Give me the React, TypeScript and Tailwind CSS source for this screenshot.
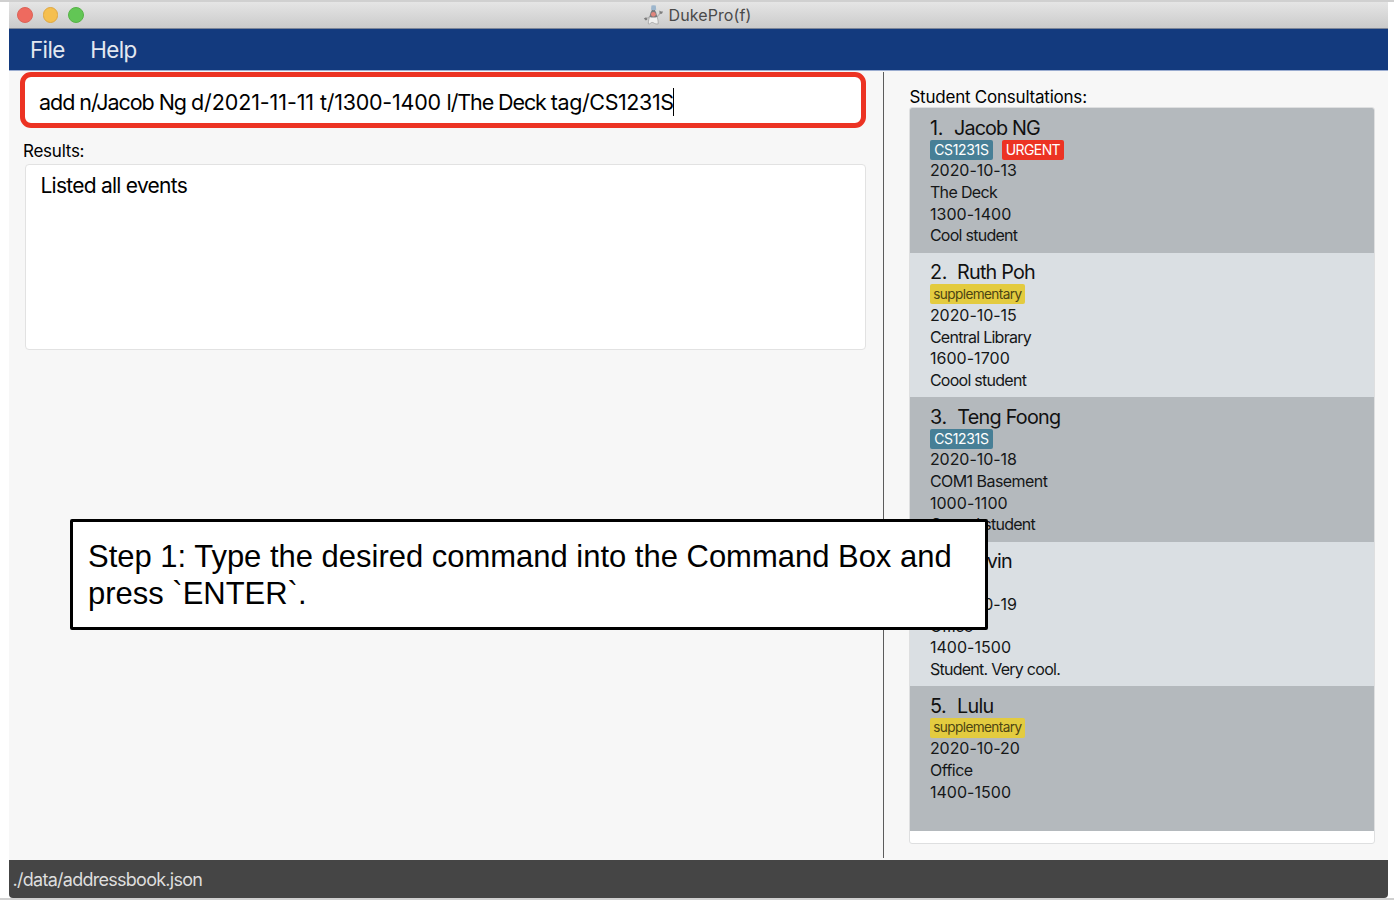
type Tag = { label: string; className: string };
type Consultation = {
  name: string;
  nameClass: string;
  tags: Tag[];
  date: string;
  place: string;
  placeClass: string;
  time: string;
  note: string;
};

const module: Tag = { label: "CS1231S", className: "bg-[#477f96] text-white w-[63px] tracking-[-0.35px] text-[14px]" };
const urgent: Tag = { label: "URGENT", className: "bg-[#ec3323] text-white w-[62px] tracking-[-0.6px] text-[14px]" };
const extra: Tag = { label: "supplementary", className: "bg-[#e3cb3f] text-[#4c4413] w-[95px] tracking-[-0.6px] text-[13.6px]" };

const consultations: Consultation[] = [
  { name: "Jacob NG", nameClass: "ml-[11px] tracking-[-0.9px]", tags: [module, urgent], date: "2020-10-13", place: "The Deck", placeClass: "tracking-[-0.65px]", time: "1300-1400", note: "Cool student" },
  { name: "Ruth Poh", nameClass: "ml-[10px] tracking-[-0.8px]", tags: [extra], date: "2020-10-15", place: "Central Library", placeClass: "tracking-[-0.73px]", time: "1600-1700", note: "Coool student" },
  { name: "Teng Foong", nameClass: "ml-[10.5px] tracking-[-0.75px]", tags: [module], date: "2020-10-18", place: "COM1 Basement", placeClass: "tracking-[-0.55px]", time: "1000-1100", note: "Cooool student" },
  { name: "Kelvin", nameClass: "ml-[13px] tracking-[-0.8px]", tags: [], date: "2020-10-19", place: "Office", placeClass: "tracking-[-0.5px]", time: "1400-1500", note: "Student. Very cool." },
  { name: "Lulu", nameClass: "ml-[10.5px] tracking-[-0.7px]", tags: [extra], date: "2020-10-20", place: "Office", placeClass: "tracking-[-0.5px]", time: "1400-1500", note: "" },
];

function DukeIcon() {
  return (
    <svg width="22" height="20" viewBox="0 0 22 20" className="shrink-0">
      <path d="M6 12.4 L3.2 13.6 M14.2 11.6 L17.6 8" fill="none" stroke="#b4b4b4" strokeWidth="1.2" strokeLinecap="round" />
      <path d="M.8 13.4 L3.2 12.2 L4.4 14.4 L2.8 15.6Z M16.4 5.4 L18 6.4 L20 6.4 L19 8.8 L16.6 8.8Z" fill="#7d7d7d" />
      <path d="M7 11 C5.8 13.5 5.4 16 5.3 18.8 C7 19.6 7.6 17.4 9.2 17.4 C11 17.4 11.6 19.6 15.2 18.9 C15.2 16 14.9 13.5 13.8 11Z" fill="#f0f0f0" stroke="#9a9a9a" strokeWidth=".7" />
      <path d="M10.4 3 C8 5.5 7 9 6.5 12 Q10.4 13.2 14.2 12 C13.7 9 12.8 5.5 10.4 3Z" fill="#77797d" />
      <path d="M8 4.8 L8.4 .6 Q10.6 -.2 12.8 .6 L13.2 4.8 Q10.6 5.6 8 4.8Z" fill="#9db6cd" />
      <circle cx="10.4" cy="9.3" r="2.4" fill="#e2857d" />
    </svg>
  );
}

function ConsultationCard({ item, index }: { item: Consultation; index: number }) {
  return (
    <li className="h-[144.5px] shrink-0 pl-[19.5px] pt-[8.5px] text-[16px] leading-[21.6px] text-[#151718] odd:bg-[#b4b9bd] even:bg-[#dadfe3]">
      <div className="flex h-[22.4px] whitespace-nowrap text-[19.8px] leading-[22px] text-[#111]">
        <span className="tracking-[-0.3px]">{index}.</span>
        <span className={item.nameClass}>{item.name}</span>
      </div>
      <div className="flex h-[21.6px] gap-[9px] pt-px">
        {item.tags.map((tag) => (
          <span key={tag.label} className={`flex h-[20px] items-center justify-center rounded-[2px] ${tag.className}`}>
            {tag.label}
          </span>
        ))}
      </div>
      <div className="tracking-[-0.05px]">{item.date}</div>
      <div className={item.placeClass}>{item.place}</div>
      <div className="tracking-[0.05px]">{item.time}</div>
      <div className="tracking-[-0.73px]">{item.note}</div>
    </li>
  );
}

export default function App() {
  return (
    <div className="relative flex h-[900px] w-[1394px] flex-col overflow-hidden border-y-2 border-[#d0d0d0] bg-white pl-[8.5px] pr-[6px] font-['Inter',sans-serif] text-black">
      <header className="flex h-[27px] shrink-0 items-center border-b border-[#7d8698] bg-linear-to-b from-[#e5e5e5] to-[#cbcbcb]">
        <div className="flex w-[634.5px] items-center gap-[10px] pl-[8.5px]">
          <span className="size-[15.5px] rounded-full border border-[#dc6358] bg-[#ee6a5f]" />
          <span className="size-[15.5px] rounded-full border border-[#dfa741] bg-[#f5bf4f]" />
          <span className="size-[15.5px] rounded-full border border-[#57b347] bg-[#62c655]" />
        </div>
        <DukeIcon />
        <h1 className="ml-[3.5px] text-[16px] leading-[22px] tracking-[0.1px] text-[#4a4a4a]">DukePro(f)</h1>
      </header>

      <nav className="flex h-[42px] shrink-0 items-center gap-[25.5px] border-b border-[#9aacd0] bg-[#133a7e] pl-[21.5px] text-[22.4px] tracking-[-0.6px] text-[#e3e8f0]">
        <span>File</span>
        <span>Help</span>
      </nav>

      <main className="flex h-[789px] shrink-0 bg-[#f7f7f7]">
        <section className="flex w-[874.5px] shrink-0 flex-col pl-[11.5px] pt-[1px]">
          <div className="flex h-[56px] w-[846px] items-center rounded-[11px] border-[5px] border-[#ec3323] bg-white pl-[14px] pt-[4px]">
            <span className="whitespace-pre text-[21.5px]">
              <span className="tracking-[-1.05px]">{"add n/Jacob Ng "}</span>
              <span className="tracking-[-0.1px]">{"d/2021-11-11 "}</span>
              <span className="tracking-[-0.25px]">{"t/1300-1400 "}</span>
              <span className="tracking-[-1.1px]">{"l/The Deck "}</span>
              <span className="tracking-[-0.4px]">tag/CS1231S</span>
            </span>
            <span className="-ml-px h-[28px] w-px bg-black" />
          </div>
          <div className="mt-[12px] pl-[3px] text-[17px] leading-[22px] tracking-[-0.25px]">Results:</div>
          <div className="ml-[5px] mt-[2px] h-[185.5px] w-[841px] rounded-[4px] border border-[#e2e2e2] bg-white px-[14.5px] pt-[6.5px] text-[21px] leading-[28px] tracking-[-0.75px]">
            Listed all events
          </div>
        </section>

        <section className="mb-[2px] mt-[1px] flex grow flex-col border-l border-[#5c5c5c] pl-[25.4px] pr-[13px]">
          <h2 className="mt-[14px] h-[21px] text-[17px] leading-[22px] tracking-[-0.22px]">Student Consultations:</h2>
          <ul className="flex h-[736.5px] w-[465.5px] shrink-0 flex-col overflow-hidden rounded-[3px] border border-[#dedfe0] bg-white">
            {consultations.map((item, i) => (
              <ConsultationCard key={item.name} item={item} index={i + 1} />
            ))}
          </ul>
        </section>
      </main>

      <footer className="flex h-[38px] shrink-0 items-center rounded-b-[4px] bg-[#454545] pl-[4px] text-[18px] tracking-[-0.73px] text-[#dedede]">
        ./data/addressbook.json
      </footer>

      <aside className="absolute left-[70px] top-[517px] h-[111px] w-[918px] rounded-[2px] border-[3px] border-black bg-white pl-[15px] pt-[16px] font-['Liberation_Sans',Arial,sans-serif] text-[30.97px] leading-[37px]">
        Step 1: Type the desired command into the Command Box and
        <br />
        press `ENTER`.
      </aside>
    </div>
  );
}
